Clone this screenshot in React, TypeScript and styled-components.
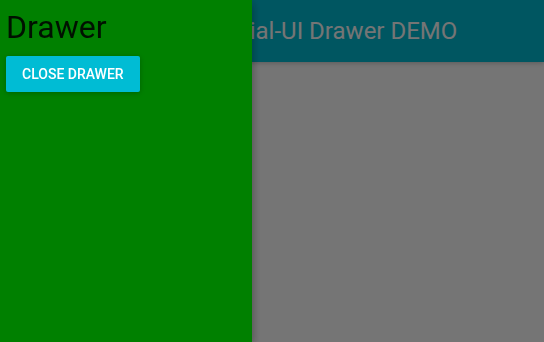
import styled, { createGlobalStyle } from 'styled-components';

const GlobalStyle = createGlobalStyle`
  html, body {
    margin: 0;
    padding: 0;
    background: #ffffff;
    font-family: Roboto, "Noto Sans", sans-serif;
    overflow: hidden;
  }
`;

const Page = styled.div`
  width: 100vw;
  height: 100vh;
  background: #ffffff;
`;

const AppBar = styled.header`
  display: flex;
  align-items: center;
  height: 62px;
  padding-left: 187px;
  background: #00bcd4;
  box-shadow: 0 1px 6px rgba(0, 0, 0, 0.12), 0 1px 4px rgba(0, 0, 0, 0.12);
`;

const AppTitle = styled.h1`
  margin: 0;
  font-size: 24px;
  font-weight: 400;
  line-height: 62px;
  color: #ffffff;
  white-space: nowrap;
`;

const Overlay = styled.div`
  position: fixed;
  inset: 0;
  background: rgba(0, 0, 0, 0.54);
`;

const Drawer = styled.aside`
  position: fixed;
  top: 0;
  left: 0;
  bottom: 0;
  width: 252px;
  padding: 7px 6px;
  box-sizing: border-box;
  background: #008000;
  box-shadow: 0 3px 10px rgba(0, 0, 0, 0.16), 0 3px 10px rgba(0, 0, 0, 0.23);
`;

const DrawerTitle = styled.h2`
  margin: 0 0 9px;
  font-size: 32px;
  font-weight: 400;
  line-height: 40px;
  color: rgba(0, 0, 0, 0.87);
`;

const RaisedButton = styled.button`
  display: block;
  height: 36px;
  min-width: 88px;
  padding: 0 16px;
  border: none;
  border-radius: 2px;
  background: #00bcd4;
  color: #ffffff;
  font-family: Roboto, "Noto Sans", sans-serif;
  font-size: 14px;
  font-weight: 500;
  text-transform: uppercase;
  box-shadow: 0 1px 6px rgba(0, 0, 0, 0.12), 0 1px 4px rgba(0, 0, 0, 0.12);
  cursor: pointer;
`;

export default function App() {
  return (
    <>
      <GlobalStyle />
      <Page>
        <AppBar>
          <AppTitle>Material-UI Drawer DEMO</AppTitle>
        </AppBar>
      </Page>
      <Overlay />
      <Drawer>
        <DrawerTitle>Drawer</DrawerTitle>
        <RaisedButton>Close Drawer</RaisedButton>
      </Drawer>
    </>
  );
}
